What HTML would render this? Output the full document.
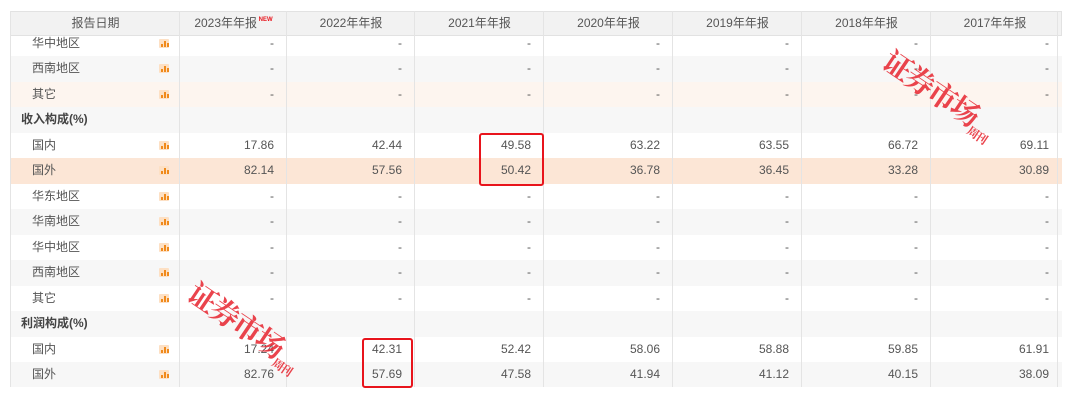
<!DOCTYPE html>
<html><head><meta charset="utf-8"><style>
body{margin:0;width:1080px;height:405px;background:#fff;overflow:hidden;position:relative;font-family:"Liberation Sans","Noto Sans CJK SC",sans-serif;font-size:12px;color:#555}
.t{position:absolute;left:10px;top:11px;width:1052px;height:376px;overflow:hidden}
.hd{position:absolute;left:0;top:0;height:25px;width:1052px;background:#f2f2f2;border:1px solid #e2e2e2;box-sizing:border-box;z-index:2}
.row{position:absolute;left:0;width:1052px;height:25.5px}
.c{position:absolute;top:0;height:100%;line-height:25.5px;box-sizing:border-box}
.vl{position:absolute;top:0;height:376px;width:1px;background:#e4e4e4;z-index:3}
.ic{position:absolute;left:149px;top:8px;width:10px;height:9px;background:#fde0c4;border-radius:1px}
.ic i{position:absolute;bottom:1px;width:2px;background:#f08a1c}
.box{position:absolute;border:2px solid #e8141c;border-radius:3px;z-index:4}
.wm{position:absolute;color:#e8303a;font-family:"Noto Serif CJK SC",serif;font-weight:bold;z-index:5;transform-origin:left top;opacity:.9;white-space:nowrap}
.nw{position:relative;top:-6px;color:#e8141c;font-size:6px;font-weight:bold}
</style></head><body>
<div class="t" id="t"></div>
<div class="box" style="left:479px;top:133px;width:61px;height:49px"></div>
<div class="box" style="left:362px;top:338px;width:47px;height:46px"></div>
<div class="wm" style="left:898px;top:40px;transform:rotate(34deg);font-size:29px;letter-spacing:-2px">证券市场<span style="font-size:12px;display:inline-block;width:12px;line-height:12px;vertical-align:bottom">周刊</span></div>
<div class="wm" style="left:203px;top:272px;transform:rotate(34deg);font-size:29px;letter-spacing:-2px">证券市场<span style="font-size:12px;display:inline-block;width:12px;line-height:12px;vertical-align:bottom">周刊</span></div>
<script>
var cols=[0,169,276,404,533,662,791,920,1048];
var hdr=["报告日期","2023年年报","2022年年报","2021年年报","2020年年报","2019年年报","2018年年报","2017年年报"];
var t=document.getElementById('t'),h='<div class="hd">';
for(var i=0;i<8;i++){h+='<div class="c" style="left:'+cols[i]+'px;width:'+(cols[i+1]-cols[i])+'px;text-align:center;line-height:23px">'+hdr[i]+(i==1?'<span class="nw"> NEW</span>':'')+'</div>';}
h+='</div>';
var D=['-','-','-','-','-','-','-'];
var rows=[
["华中地区",D,"#fff"],["西南地区",D,"#f7f7f7"],["其它",D,"#fdf5ef"],["收入构成(%)",null,"#f7f7f7"],
["国内",["17.86","42.44","49.58","63.22","63.55","66.72","69.11"],"#fff"],
["国外",["82.14","57.56","50.42","36.78","36.45","33.28","30.89"],"#fce6d6"],
["华东地区",D,"#fff"],["华南地区",D,"#f7f7f7"],["华中地区",D,"#fff"],["西南地区",D,"#f7f7f7"],["其它",D,"#fff"],
["利润构成(%)",null,"#f7f7f7"],
["国内",["17.24","42.31","52.42","58.06","58.88","59.85","61.91"],"#fff"],
["国外",["82.76","57.69","47.58","41.94","41.12","40.15","38.09"],"#f7f7f7"]];
for(var r=0;r<rows.length;r++){var R=rows[r],y=19.5+r*25.5;
h+='<div class="row" style="top:'+y+'px;background:'+R[2]+'">';
if(R[1]){h+='<div class="c" style="left:22px">'+R[0]+'</div><div class="ic"><i style="left:2px;height:3px"></i><i style="left:5px;height:6px"></i><i style="left:8px;height:4px"></i></div>';
for(var i=0;i<7;i++)h+='<div class="c" style="left:'+cols[i+1]+'px;width:'+(cols[i+2]-cols[i+1])+'px;text-align:right;padding-right:'+(i==6?9:12)+'px">'+R[1][i]+'</div>';}
else h+='<div class="c" style="left:11px;font-weight:bold;color:#444">'+R[0]+'</div>';
h+='</div>';}
for(var i=0;i<9;i++)h+='<div class="vl" style="left:'+(i==8?1047:cols[i])+'px"></div>';
t.innerHTML=h;
</script>
</body></html>
